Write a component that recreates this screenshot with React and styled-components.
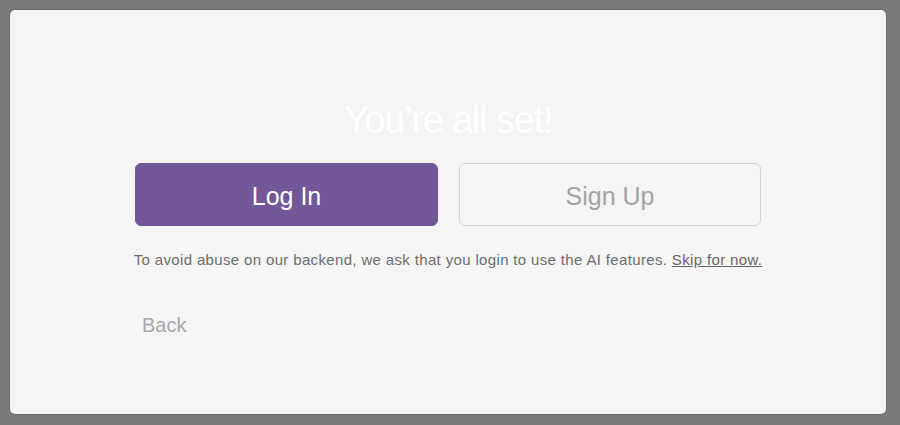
import React from "react";
import styled, { createGlobalStyle } from "styled-components";

const GlobalStyle = createGlobalStyle`
  html, body {
    margin: 0;
    padding: 0;
    background: #7b7b7b;
    font-family: "Liberation Sans", Arial, sans-serif;
  }
`;

export default function App() {
  return (
    <>
      <GlobalStyle />
      <Screen>
        <Panel>
          <Title>You’re all set!</Title>
          <ButtonRow>
            <ActionButton primary>Log In</ActionButton>
            <ActionButton>Sign Up</ActionButton>
          </ButtonRow>
          <Notice>
            To avoid abuse on our backend, we ask that you login to use the AI
            features. <SkipLink href="#">Skip for now.</SkipLink>
          </Notice>
          <Footer>
            <BackButton>Back</BackButton>
          </Footer>
        </Panel>
      </Screen>
    </>
  );
}

const Screen = styled.div`
  width: 900px;
  height: 425px;
  padding: 10px 14px 11px 10px;
  box-sizing: border-box;
`;

const Panel = styled.div`
  height: 404px;
  background: #f5f5f5;
  border-radius: 5px;
  box-shadow: 0 0 0 0.5px rgba(0, 0, 0, 0.25);
  display: flex;
  flex-direction: column;
  align-items: center;
  padding-top: 87px;
  box-sizing: border-box;
`;

const Title = styled.h1`
  margin: 0;
  font-size: 38px;
  line-height: 46px;
  font-weight: 400;
  letter-spacing: -1.2px;
  color: #ffffff;
`;

const ButtonRow = styled.div`
  display: flex;
  gap: 21px;
  margin-top: 20px;
`;

const ActionButton = styled.button`
  width: ${(p) => (p.primary ? "303px" : "302px")};
  height: 63px;
  padding: 3px 0 0;
  border-radius: 6px;
  box-sizing: border-box;
  border: 1px solid ${(p) => (p.primary ? "#725799" : "#d3d3d3")};
  background: ${(p) => (p.primary ? "#725799" : "transparent")};
  color: ${(p) => (p.primary ? "#ffffff" : "#a3a3a3")};
  font-family: "Liberation Sans", Arial, sans-serif;
  font-size: 25px;
  cursor: pointer;
`;

const Notice = styled.p`
  margin: 25px 0 0;
  font-size: 15px;
  line-height: 17px;
  letter-spacing: 0.35px;
  color: #6e6e6e;
`;

const SkipLink = styled.a`
  color: #666666;
  text-decoration: underline;
`;

const Footer = styled.div`
  align-self: stretch;
  padding-left: 125px;
  margin-top: 45px;
`;

const BackButton = styled.button`
  border: none;
  background: none;
  padding: 0 0 0 7px;
  font-family: "Liberation Sans", Arial, sans-serif;
  font-size: 20px;
  line-height: 24px;
  color: #a8a8a8;
  cursor: pointer;
`;
